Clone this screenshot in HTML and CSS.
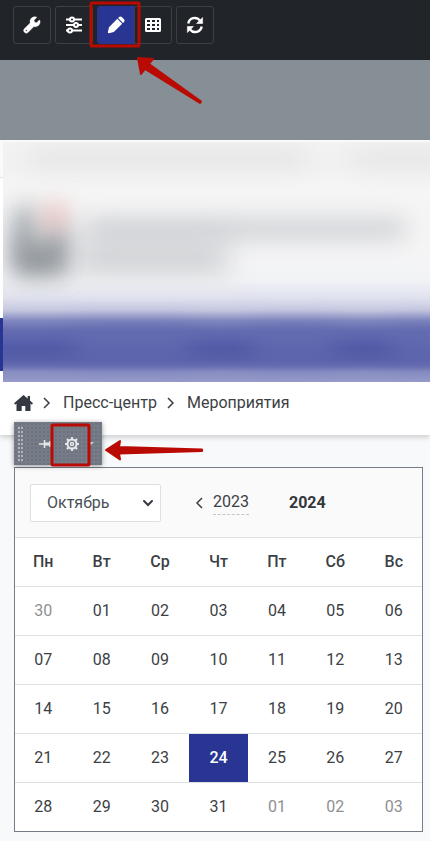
FILE: index.html
```
<!DOCTYPE html>
<html lang="ru">
<head>
    <meta charset="UTF-8">
    <meta name="viewport" content="width=device-width, initial-scale=1.0">
    <title>Мероприятия</title>
    <link rel="stylesheet" href="styles.css">
</head>
<body>

<div class="topbar">
    <button class="tool" type="button" aria-label="Настройки">
        <svg width="18" height="18" viewBox="0 0 18 18"><path d="M16.900 4.500a.5.5 0 0 0-.8-.2l-2.400 2.400-2.200-.4-.4-2.200 2.400-2.400a.5.5 0 0 0-.2-.8 4.900 4.900 0 0 0-6.100 6L1.500 12.600a2.500 2.500 0 0 0 3.700 3.700l5.700-5.700a4.900 4.900 0 0 0 6-6.100zM3.400 15.400a.8.8 0 1 1 0-1.600.8.8 0 0 1 0 1.600z" fill="#fff" stroke="#fff" stroke-width=".4" fill-rule="evenodd"/></svg>
    </button>
    <button class="tool" type="button" aria-label="Параметры">
        <svg width="18" height="18" viewBox="0 0 18 18" fill="none" stroke="#fff" stroke-width="2"><path d="M1 3.500h4M9 3.500h8M1 9h8M13 9h4M1 14.500h2M7 14.500h10"/><circle cx="7" cy="3.500" r="2"/><circle cx="11" cy="9" r="2"/><circle cx="5" cy="14.500" r="2"/></svg>
    </button>
    <div class="tool-group">
        <button class="tool active" type="button" aria-label="Правка">
            <svg width="18" height="18" viewBox="0 0 18 18" fill="#fff"><path d="M10.300 2.800l4.900 4.900-8.400 8.400-4.800 1.100a1 1 0 0 1-1.100-1.100L2 11.200zM11.100 2l1-1a2 2 0 0 1 2.700 0L17 3.200a2 2 0 0 1 0 2.700l-1 1z"/></svg>
        </button>
        <button class="tool" type="button" aria-label="Таблица">
            <svg width="18" height="18" viewBox="0 0 18 18"><path d="M2.500 2h13A1.500 1.500 0 0 1 17 3.500v11a1.500 1.500 0 0 1-1.500 1.500h-13A1.500 1.500 0 0 1 1 14.500v-11A1.500 1.500 0 0 1 2.500 2zM3 4v2h3V4zM8 4v2h3V4zM13 4v2h2V4zM3 8v2h3V8zM8 8v2h3V8zM13 8v2h2V8zM3 12v2h3v-2zM8 12v2h3v-2zM13 12v2h2v-2z" fill="#fff" fill-rule="evenodd"/></svg>
        </button>
    </div>
    <button class="tool" type="button" aria-label="Обновить">
        <svg width="18" height="18" viewBox="0 0 18 18"><path d="M2.300 7.500A6.600 6.600 0 0 1 14 4.500M15.700 10.500A6.600 6.600 0 0 1 4 13.500" fill="none" stroke="#fff" stroke-width="2.400"/><path d="M16.600 1.500v6h-6zM1.400 16.500v-6h6z" fill="#fff" stroke="#fff" stroke-width=".6" stroke-linejoin="round"/></svg>
    </button>
    <svg class="mark mark-edit" width="118" height="106" viewBox="0 0 118 106">
        <rect x="3" y="3" width="48" height="43" rx="1"/>
        <path d="M50 58l15 1-4 5 52 37.500-1 1.500-55-34-4 5z"/>
    </svg>
</div>

<div class="banner"></div>

<header class="site-header">
    <div class="header-top"></div>
    <div class="header-logo"></div>
    <div class="header-nav"></div>
    <div class="haze">
        <span class="smear line-top"></span>
        <span class="smear line-top-right"></span>
        <span class="smear glow"></span>
        <span class="smear logo-left"></span>
        <span class="smear logo-bottom"></span>
        <span class="smear logo-right"></span>
        <span class="smear logo-dot"></span>
        <span class="smear title-first"></span>
        <span class="smear title-second"></span>
        <span class="smear menu-first"></span>
        <span class="smear menu-second"></span>
        <span class="smear menu-third"></span>
    </div>
</header>

<nav class="breadcrumb">
    <a class="home" href="#" aria-label="Главная">
        <svg width="19" height="18" viewBox="0 0 19 18"><path d="M9.500 1L0 9.200l1.200 1.500 1.300-1.100V16.500q0 .5.500.5h4.700v-5h3.600v5H16q.5 0 .5-.5V9.600l1.300 1.100L19 9.200l-3-2.600V2h-2.300v2.600z" fill="#343840"/></svg>
    </a>
    <svg class="sep" width="8" height="12" viewBox="0 0 8 12"><path d="M1 1l5 5-5 5"/></svg>
    <a href="#">Пресс-центр</a>
    <svg class="sep" width="8" height="12" viewBox="0 0 8 12"><path d="M1 1l5 5-5 5"/></svg>
    <a href="#">Мероприятия</a>
</nav>

<main>
    <div class="panel">
        <span class="grip"></span>
        <svg class="pin" width="12" height="12" viewBox="0 0 12 12"><path d="M0 6h5M5.500 2v8M5 6h6M11 3v6" fill="none" stroke="#e6e8ea" stroke-width="1.500"/><path d="M6 4.500h5v3H6z" fill="#e6e8ea"/></svg>
        <button class="gear" type="button" aria-label="Изменить параметры">
            <svg width="16" height="16" viewBox="0 0 16 16" fill="none" stroke="#e6e8ea"><circle cx="8" cy="8" r="4.500" stroke-width="2"/><circle cx="8" cy="8" r="1.500" stroke-width="1.500"/><path d="M8 1v3M8 12v3M1 8h3M12 8h3M3 3l2 2M11 11l2 2M3 13l2-2M11 5l2-2" stroke-width="2"/></svg>
        </button>
        <span class="caret"></span>
        <svg class="mark mark-gear" width="158" height="46" viewBox="0 0 158 46">
            <rect x="3" y="3" width="37" height="40" rx="1"/>
            <path d="M57 28l14-9-1 6 83 2.500v1.500l-83 2.500 1 6z"/>
        </svg>
    </div>

    <section class="calendar">
        <div class="calendar-head">
            <select class="month" aria-label="Месяц">
                <option>Октябрь</option>
            </select>
            <a class="year-prev" href="#">
                <svg width="8" height="12" viewBox="0 0 8 12"><path d="M7 1L2 6l5 5"/></svg>
                <span>2023</span>
            </a>
            <span class="year">2024</span>
        </div>
        <table>
            <thead>
                <tr><th>Пн</th><th>Вт</th><th>Ср</th><th>Чт</th><th>Пт</th><th>Сб</th><th>Вс</th></tr>
            </thead>
            <tbody>
                <tr><td class="other">30</td><td>01</td><td>02</td><td>03</td><td>04</td><td>05</td><td>06</td></tr>
                <tr><td>07</td><td>08</td><td>09</td><td>10</td><td>11</td><td>12</td><td>13</td></tr>
                <tr><td>14</td><td>15</td><td>16</td><td>17</td><td>18</td><td>19</td><td>20</td></tr>
                <tr><td>21</td><td>22</td><td>23</td><td class="today">24</td><td>25</td><td>26</td><td>27</td></tr>
                <tr><td>28</td><td>29</td><td>30</td><td>31</td><td class="other">01</td><td class="other">02</td><td class="other">03</td></tr>
            </tbody>
        </table>
    </section>
</main>

</body>
</html>
```
FILE: styles.css
```
* {
    box-sizing: border-box;
}
body {
    margin: 0;
    background-color: #f8f9fb;
    color: #3c3f45;
    font-family: Roboto, "Liberation Sans", sans-serif;
    font-size: 16px;
    line-height: 24px;
}
a {
    color: inherit;
    text-decoration: none;
}

/* admin toolbar */
.topbar {
    position: relative;
    display: flex;
    gap: 4px;
    height: 60px;
    padding: 6px 13px;
    background-color: #212529;
}
.tool-group {
    display: flex;
}
.tool {
    display: flex;
    align-items: center;
    justify-content: center;
    width: 38px;
    height: 38px;
    padding: 0;
    border: 1px solid #3d4146;
    border-radius: 3px;
    background: none;
    cursor: pointer;
}
.tool-group .tool + .tool {
    margin-left: -1px;
    border-radius: 0 3px 3px 0;
}
.tool-group .active {
    border-color: #283593;
    border-radius: 3px 0 0 3px;
    background-color: #283593;
}
.banner {
    height: 80px;
    background-color: #868e96;
}

/* red frames and arrows */
.mark {
    position: absolute;
    z-index: 3;
    pointer-events: none;
}
.mark rect {
    fill: none;
    stroke: #b90b03;
    stroke-width: 3;
}
.mark path {
    fill: #b90b03;
    stroke: #b90b03;
    stroke-width: 2;
    stroke-linejoin: round;
}
.mark-edit {
    top: 0;
    left: 88px;
}
.mark-gear {
    top: 0;
    left: 35px;
}

/* site header */
.site-header {
    position: relative;
    height: 242px;
    background-color: #fff;
}
.header-top {
    height: 38px;
    border-bottom: 1px solid #e4e4e4;
    background-color: #fafafa;
}
.header-logo {
    height: 140px;
}
.header-nav {
    height: 53px;
    background-color: #283593;
}
.haze {
    position: absolute;
    top: 2px;
    right: 0;
    bottom: 0;
    left: 3px;
    overflow: hidden;
    background: linear-gradient(#f3f3f3 0, #f1f1f1 20px, #f5f5f5 45px, #f5f5f6 110px, #f2f3f6 138px, #dfe1ee 156px, #c6c8e0 168px, #7f86be 179px, #656db1 188px, #525aa8 206px, #5860aa 218px, #666db0 224px, #888dc2 230px, #979cca 240px);
}
.smear {
    position: absolute;
    filter: blur(12px);
}
.line-top {
    top: 10px;
    left: 28px;
    width: 274px;
    height: 12px;
    background-color: #dedede;
}
.line-top-right {
    top: 10px;
    right: -30px;
    width: 106px;
    height: 12px;
    background-color: #dedede;
}
.glow {
    top: 84px;
    left: 0;
    width: 230px;
    height: 56px;
    background-color: #e6e7ea;
}
.logo-left {
    top: 66px;
    left: 13px;
    width: 16px;
    height: 62px;
    background-color: #848c94;
}
.logo-bottom {
    top: 104px;
    left: 16px;
    width: 42px;
    height: 26px;
    background-color: #858b90;
}
.logo-right {
    top: 84px;
    left: 46px;
    width: 14px;
    height: 44px;
    background-color: #858a8f;
}
.logo-dot {
    top: 64px;
    left: 42px;
    width: 20px;
    height: 20px;
    background-color: #e5aea6;
}
.title-first {
    top: 80px;
    left: 84px;
    width: 318px;
    height: 14px;
    background-color: #bfc1c6;
}
.title-second {
    top: 110px;
    left: 80px;
    width: 138px;
    height: 12px;
    background-color: #bec0c3;
}
.menu-first,
.menu-second,
.menu-third {
    top: 190px;
    height: 24px;
    background-color: #656db1;
}
.menu-first {
    left: 72px;
    width: 114px;
}
.menu-second {
    left: 250px;
    width: 80px;
}
.menu-third {
    right: -30px;
    width: 68px;
}

.breadcrumb {
    display: flex;
    align-items: center;
    height: 53px;
    padding: 0 14px 12px;
    background-color: #fff;
    box-shadow: 0 2px 6px rgba(0, 0, 0, .2);
}
.home {
    display: flex;
    margin-right: 10px;
}
.sep {
    margin-right: 12px;
    fill: none;
    stroke: #3c3f45;
    stroke-width: 1.5;
}
.sep:not(.home + .sep) {
    margin-left: 10px;
}

main {
    position: relative;
    padding: 32px 7px 9px 14px;
}

/* component edit panel, hangs over the calendar corner */
.panel {
    position: absolute;
    top: -13px;
    left: 14px;
    display: flex;
    align-items: center;
    width: 88px;
    height: 43px;
    padding-left: 4px;
    background-color: #757c88;
    background-image: radial-gradient(#6c737f 1px, transparent 1px);
    background-size: 4px 4px;
    box-shadow: 0 1px 5px rgba(0, 0, 0, .4);
}
.grip {
    width: 5px;
    height: 34px;
    background: repeating-linear-gradient(#b4b8be 0 2px, transparent 2px 4px);
    mask: linear-gradient(90deg, #000 2px, transparent 2px 3px, #000 3px);
}
.pin {
    margin-left: 16px;
}
.gear {
    display: flex;
    margin-left: 13px;
    padding: 0;
    border: 0;
    background: none;
    cursor: pointer;
}
.caret {
    margin-left: 8px;
    border: 3px solid transparent;
    border-top-color: #c9ccd1;
    border-bottom: 0;
}

.calendar {
    overflow: hidden;
    border: 1px solid #757c88;
    background-color: #fff;
}
.calendar-head {
    display: flex;
    align-items: center;
    height: 70px;
    padding: 0 15px;
    border-bottom: 1px solid #dee0e4;
    background-color: #fafafa;
}
.month {
    width: 131px;
    height: 38px;
    padding: 0 16px;
    border: 1px solid #dedfe2;
    border-radius: 2px;
    appearance: none;
    background: #fff url("data:image/svg+xml,%3Csvg xmlns='http://www.w3.org/2000/svg' width='12' height='8' viewBox='0 0 12 8'%3E%3Cpath d='M2 2l4 4 4-4' fill='none' stroke='%23343a40' stroke-width='2' stroke-linecap='round'/%3E%3C/svg%3E") no-repeat right 6px center;
    color: #495057;
    font: inherit;
}
.year-prev {
    display: flex;
    align-items: center;
    margin-left: 34px;
}
.year-prev svg {
    margin-right: 10px;
    fill: none;
    stroke: #3c3f45;
    stroke-width: 1.5;
}
.year-prev span {
    border-bottom: 1px dashed #c4c6c9;
}
.year {
    margin-left: 40px;
    color: #33363b;
    font-weight: 700;
}
table {
    width: calc(100% + 2px);
    margin: 0 -1px;
    border-collapse: separate;
    border-spacing: 0;
    table-layout: fixed;
}
th,
td {
    height: 49px;
    padding: 0;
    border-bottom: 1px solid #dee0e4;
    text-align: center;
}
th {
    font-weight: 500;
}
tbody tr:last-child td {
    height: 48px;
    border-bottom: 0;
}
.other {
    color: #8e9093;
}
.today {
    background-color: #283593;
    color: #fff;
    font-weight: 500;
}
```
